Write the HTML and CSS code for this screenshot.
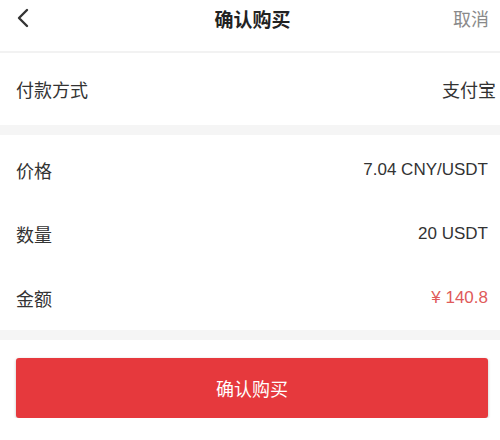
FILE: index.html
```html
<!DOCTYPE html>
<html lang="zh-CN">
<head>
    <meta charset="UTF-8">
    <meta name="viewport" content="width=device-width, initial-scale=1.0">
    <title>确认购买</title>
    <link rel="stylesheet" href="styles.css">
</head>
<body>
    <div class="page">
        <div class="header">
            <button class="back" aria-label="返回">
                <svg width="14" height="20" viewBox="0 0 14 20">
                    <polyline points="11,2 3,10 11,18" fill="none" stroke="#333" stroke-width="2.4" stroke-linecap="round" stroke-linejoin="round"/>
                </svg>
            </button>
            <div class="title">确认购买</div>
            <button class="cancel">取消</button>
        </div>
        <div class="divider"></div>

        <div class="section pay">
            <div class="row">
                <span class="label">付款方式</span>
                <span class="value">支付宝</span>
            </div>
        </div>
        <div class="gap"></div>

        <div class="section detail">
            <div class="row">
                <span class="label">价格</span>
                <span class="value num">7.04 CNY/USDT</span>
            </div>
            <div class="row">
                <span class="label">数量</span>
                <span class="value num">20 USDT</span>
            </div>
            <div class="row">
                <span class="label">金额</span>
                <span class="value num red">¥ 140.8</span>
            </div>
        </div>
        <div class="gap"></div>

        <div class="actions">
            <button class="confirm">确认购买</button>
        </div>
    </div>
</body>
</html>
```

FILE: styles.css
```css
body {
    margin: 0;
    padding: 0;
    background-color: #fff;
    font-family: "Liberation Sans", "Noto Sans CJK SC", sans-serif;
    color: #333;
}
.page {
    width: 500px;
}
button {
    background: none;
    border: none;
    padding: 0;
    font-family: inherit;
    cursor: pointer;
}
.header {
    display: flex;
    align-items: center;
    justify-content: space-between;
    height: 36px;
    padding: 0 11px 15px 16px;
}
.back {
    display: flex;
    align-items: center;
    width: 40px;
}
.title {
    font-size: 19px;
    font-weight: bold;
    color: #222;
}
.cancel {
    width: 40px;
    text-align: right;
    font-size: 18px;
    color: #8a8a8a;
}
.divider {
    height: 2px;
    background-color: #f2f2f2;
}
.gap {
    height: 10px;
    background-color: #f5f5f5;
}
.row {
    display: flex;
    align-items: center;
    justify-content: space-between;
    padding: 0 12px 0 16px;
    height: 64px;
}
.pay .row {
    height: 72px;
    padding-right: 4px;
}
.detail {
    padding-top: 3px;
}
.label {
    font-size: 18px;
    color: #333;
}
.value {
    font-size: 18px;
    color: #333;
}
.num {
    font-size: 17px;
}
.red {
    color: #e05a5a;
}
.actions {
    padding: 18px 12px 0 16px;
}
.confirm {
    display: block;
    width: 100%;
    height: 60px;
    border-radius: 3px;
    background-color: #e6393d;
    color: #fff;
    font-size: 18px;
    box-shadow: 0 1px 3px rgba(0, 0, 0, 0.25);
}
```
